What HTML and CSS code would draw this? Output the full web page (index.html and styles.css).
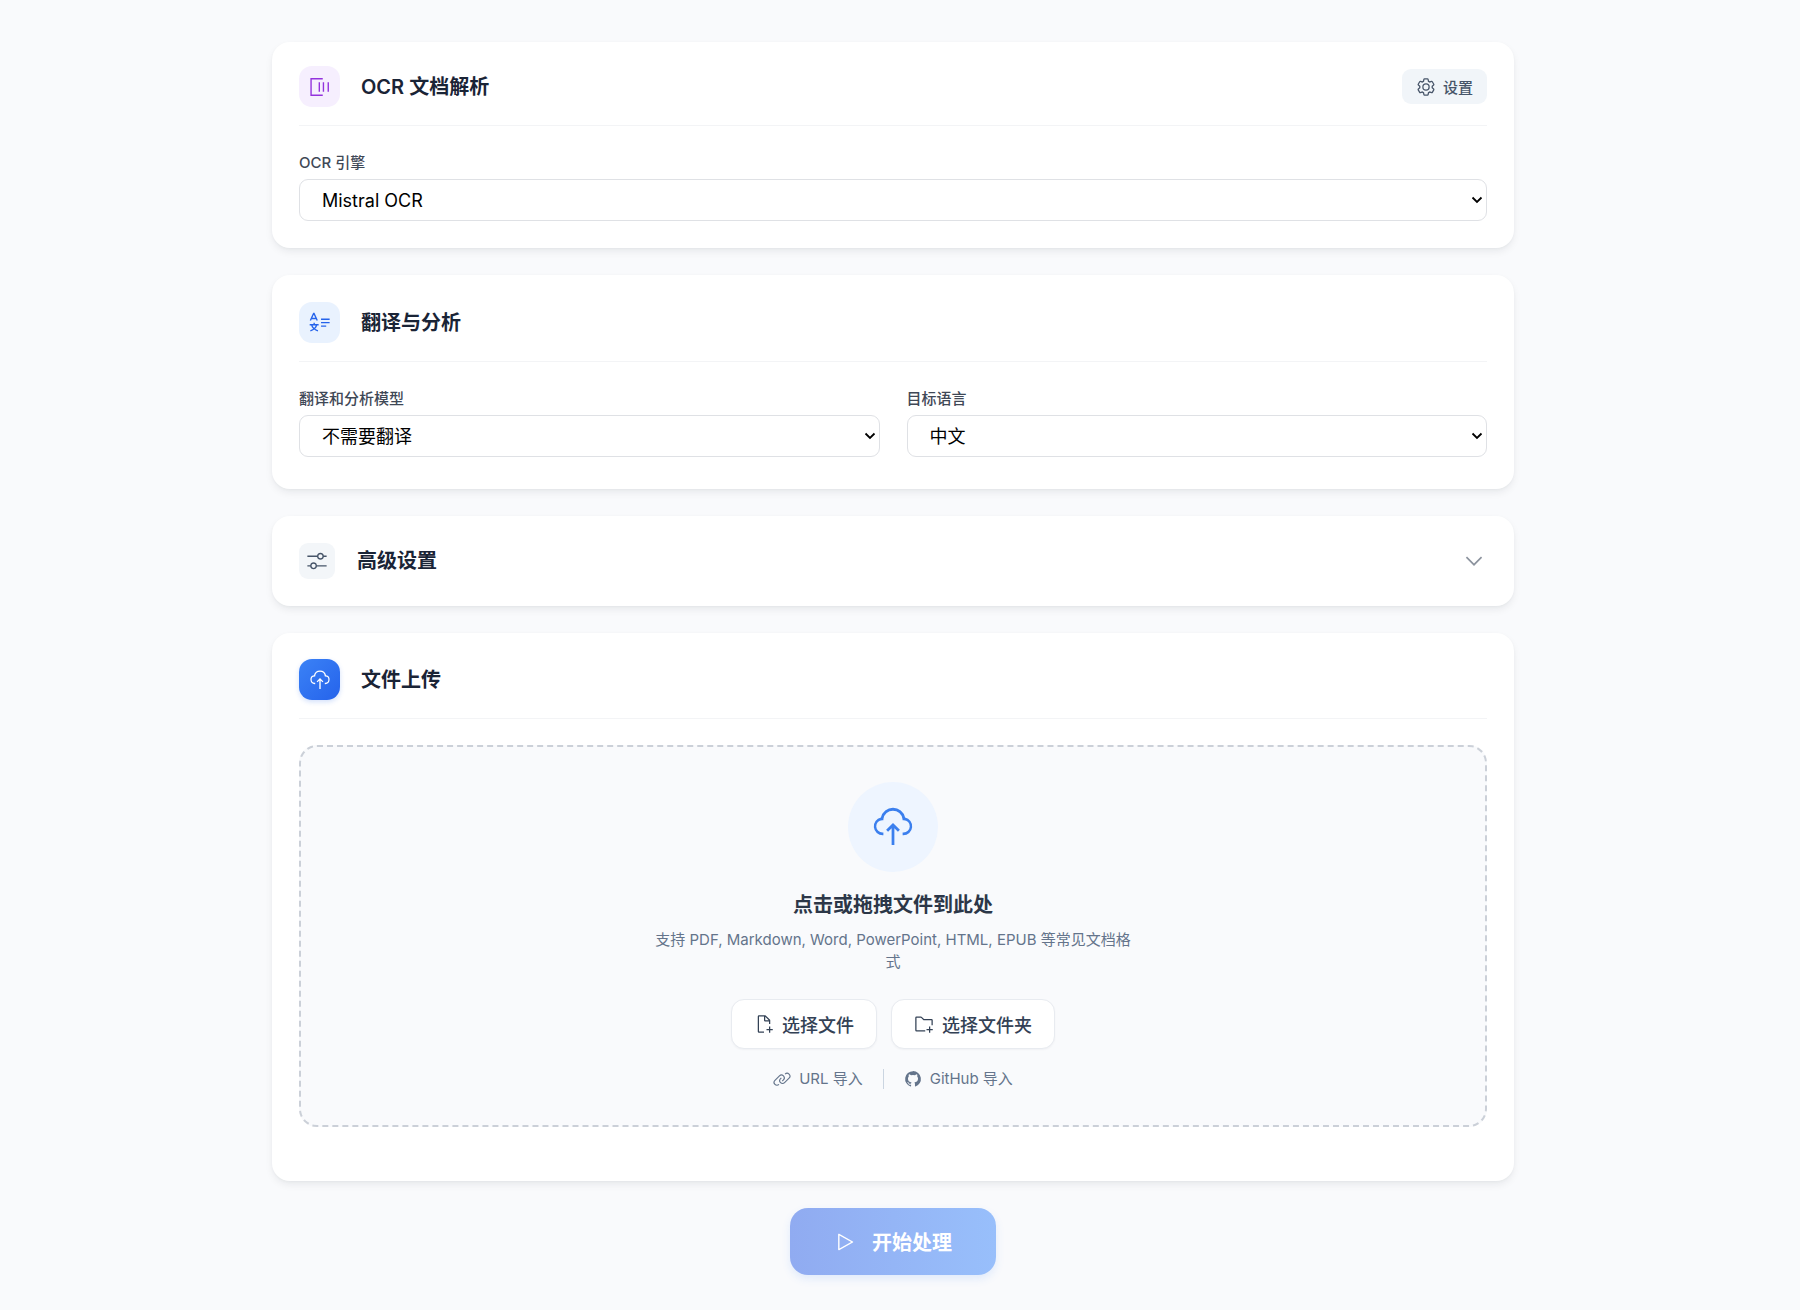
FILE: index.html
```html
<!DOCTYPE html>
<html lang="zh-CN">
<head>
<meta charset="utf-8">
<meta name="viewport" content="width=device-width, initial-scale=1">
<title>OCR 文档解析</title>
<link rel="stylesheet" href="styles.css">
</head>
<body>
<svg class="sprite" aria-hidden="true">
  <symbol id="cloud-upload" viewBox="0 0 32 32">
    <path d="M11 18l1.41 1.41L15 16.83V29h2V16.83l2.59 2.58L21 18l-5-5-5 5z"/>
    <path d="M23.5 22H23v-2h.5a4.5 4.5 0 0 0 .36-9H23l-.1-.82a7 7 0 0 0-13.88 0L9 11h-.86a4.5 4.5 0 0 0 .36 9H9v2h-.5A6.5 6.5 0 0 1 7.2 9.14a9 9 0 0 1 17.6 0A6.5 6.5 0 0 1 23.5 22z"/>
  </symbol>
</svg>
<main class="page">
  <section class="card">
    <header class="card-head">
      <span class="badge badge-purple">
        <svg class="icon-md" viewBox="0 0 32 32"><path d="M20 3v2H4v22h16v2H2V3zM14 9h2v14h-2zM20 9h2v14h-2zM27 9h2v14h-2z"/></svg>
      </span>
      <h2 class="title">OCR 文档解析</h2>
      <button class="settings" type="button">
        <svg class="icon-sm" viewBox="0 0 32 32"><path d="M27 16.76v-1.53l1.92-1.68A2 2 0 0 0 29.3 11l-2.36-4a2 2 0 0 0-1.73-1 2 2 0 0 0-.64.1l-2.43.82a11.35 11.35 0 0 0-1.31-.75l-.51-2.52a2 2 0 0 0-2-1.61h-4.68a2 2 0 0 0-2 1.61l-.51 2.52a11.48 11.48 0 0 0-1.32.75l-2.38-.86A2 2 0 0 0 6.79 6a2 2 0 0 0-1.73 1L2.7 11a2 2 0 0 0 .41 2.51L5 15.24v1.53l-1.89 1.68A2 2 0 0 0 2.7 21l2.36 4a2 2 0 0 0 1.73 1 2 2 0 0 0 .64-.1l2.43-.82a11.35 11.35 0 0 0 1.31.75l.51 2.52a2 2 0 0 0 2 1.61h4.72a2 2 0 0 0 2-1.61l.51-2.52a11.48 11.48 0 0 0 1.32-.75l2.42.82a2 2 0 0 0 .64.1 2 2 0 0 0 1.73-1l2.28-4a2 2 0 0 0-.41-2.51ZM25.21 24l-3.43-1.16a8.86 8.86 0 0 1-2.71 1.57L18.36 28h-4.72l-.71-3.55a9.36 9.36 0 0 1-2.7-1.57L6.79 24l-2.36-4 2.72-2.4a8.9 8.9 0 0 1 0-3.13L4.43 12l2.36-4 3.43 1.16a8.86 8.86 0 0 1 2.71-1.57L13.64 4h4.72l.71 3.55a9.36 9.36 0 0 1 2.7 1.57L25.21 8l2.36 4-2.72 2.4a8.9 8.9 0 0 1 0 3.13L27.57 20Z"/><path d="M16 22a6 6 0 1 1 6-6 5.94 5.94 0 0 1-6 6zm0-10a3.91 3.91 0 0 0-4 4 3.91 3.91 0 0 0 4 4 3.91 3.91 0 0 0 4-4 3.91 3.91 0 0 0-4-4z"/></svg>
        设置
      </button>
    </header>
    <div class="field">
      <label for="engine">OCR 引擎</label>
      <select id="engine"><option>Mistral OCR</option></select>
    </div>
  </section>

  <section class="card card-translate">
    <header class="card-head">
      <span class="badge badge-sky">
        <svg class="icon-md" viewBox="0 0 32 32"><path class="line" d="M2 12.500 6.700 2h.600L12 12.500M3.500 9.500h7M1 18.500h13M7.500 15.500v3M4 19c1 4.500 4 6.500 9 8.500M11 19c-1 4.500-4 6.500-9 8.500M17.500 10.500h12.500M17.500 15.500h12.500M17.500 20.500h7.500"/></svg>
      </span>
      <h2 class="title">翻译与分析</h2>
    </header>
    <div class="fields">
      <div class="field">
        <label for="model">翻译和分析模型</label>
        <select id="model"><option>不需要翻译</option></select>
      </div>
      <div class="field">
        <label for="lang">目标语言</label>
        <select id="lang"><option>中文</option></select>
      </div>
    </div>
  </section>

  <section class="card card-advanced">
    <button class="toggle" type="button" aria-expanded="false">
      <span class="badge badge-gray">
        <svg class="icon-md" viewBox="0 0 32 32"><path d="M30 8h-4.100a5 5 0 0 0-9.800 0H2v2h14.100a5 5 0 0 0 9.800 0H30zm-9 4a3 3 0 1 1 3-3 3 3 0 0 1-3 3zM2 24h4.100a5 5 0 0 0 9.800 0H30v-2H15.900a5 5 0 0 0-9.800 0H2zm9-4a3 3 0 1 1-3 3 3 3 0 0 1 3-3z"/></svg>
      </span>
      <span class="title">高级设置</span>
      <svg class="chevron" viewBox="0 0 32 32"><path d="M16 22 6 12l1.400-1.400 8.600 8.600 8.600-8.600L26 12z"/></svg>
    </button>
  </section>

  <section class="card card-upload">
    <header class="card-head">
      <span class="badge badge-blue"><svg class="icon-md"><use href="#cloud-upload"/></svg></span>
      <h2 class="title">文件上传</h2>
    </header>
    <div class="dropzone">
      <span class="cloud"><svg class="icon-xl"><use href="#cloud-upload"/></svg></span>
      <h3 class="drop-title">点击或拖拽文件到此处</h3>
      <p class="hint">支持 PDF, Markdown, Word, PowerPoint, HTML, EPUB 等常见文档格式</p>
      <div class="picks">
        <button class="pick" type="button">
          <svg class="icon-sm" viewBox="0 0 32 32"><path d="M30 24h-4v-4h-2v4h-4v2h4v4h2v-4h4zM16 28H8V4h8v6a2 2 0 0 0 2 2h6v4h2v-6a.9.9 0 0 0-.3-.7l-7-7A.9.9 0 0 0 18 2H8a2 2 0 0 0-2 2v24a2 2 0 0 0 2 2h8zm2-23.600 5.600 5.600H18z"/></svg>
          选择文件
        </button>
        <button class="pick" type="button">
          <svg class="icon-sm" viewBox="0 0 32 32"><path d="M26 20h-2v4h-4v2h4v4h2v-4h4v-2h-4zM28 8H16l-3.400-3.400A2 2 0 0 0 11.200 4H4a2 2 0 0 0-2 2v20a2 2 0 0 0 2 2h14v-2H4V6h7.200l4 4H28v8h2v-8a2 2 0 0 0-2-2z"/></svg>
          选择文件夹
        </button>
      </div>
      <div class="imports">
        <button class="import" type="button">
          <svg class="icon-xs" viewBox="0 0 32 32"><path d="M29.250 6.760a6 6 0 0 0-8.500 0l1.420 1.420a4 4 0 1 1 5.670 5.670l-8 8a4 4 0 1 1-5.670-5.660l1.410-1.420-1.410-1.420-1.420 1.420a6 6 0 0 0 0 8.500A6 6 0 0 0 17 25a6 6 0 0 0 4.270-1.760l8-8a6 6 0 0 0-.02-8.480z"/><path d="M4.190 24.820a4 4 0 0 1 0-5.670l8-8a4 4 0 0 1 5.670 0A3.940 3.940 0 0 1 19 14a4 4 0 0 1-1.170 2.850L15.710 19l1.420 1.420 2.120-2.120a6 6 0 0 0-8.510-8.510l-8 8a6 6 0 0 0 0 8.510A6 6 0 0 0 7 28a6.070 6.070 0 0 0 4.280-1.760l-1.420-1.420a4 4 0 0 1-5.670 0z"/></svg>
          URL 导入
        </button>
        <span class="bar"></span>
        <button class="import" type="button">
          <svg class="icon-xs" viewBox="0 0 32 32"><path d="M16 2a14 14 0 0 0-4.430 27.280c.7.130 1-.3 1-.67s0-1.210 0-2.380c-3.890.840-4.710-1.880-4.710-1.880A3.710 3.710 0 0 0 6.240 22.300c-1.270-.860.1-.850.1-.850A2.940 2.940 0 0 1 8.480 22.900a3 3 0 0 0 4.080 1.160 2.930 2.930 0 0 1 .88-1.870c-3.100-.360-6.370-1.560-6.370-6.920a5.400 5.400 0 0 1 1.440-3.760 5 5 0 0 1 .14-3.700s1.170-.380 3.850 1.430a13.300 13.300 0 0 1 7 0c2.670-1.810 3.840-1.430 3.840-1.430a5 5 0 0 1 .14 3.700 5.400 5.400 0 0 1 1.440 3.760c0 5.380-3.270 6.560-6.390 6.910a3.330 3.330 0 0 1 .95 2.590c0 1.870 0 3.380 0 3.840s.25.810 1 .67A14 14 0 0 0 16 2z"/></svg>
          GitHub 导入
        </button>
      </div>
    </div>
  </section>

  <button class="start" type="button">
    <svg class="icon-md" viewBox="0 0 32 32"><path d="M7 28a1 1 0 0 1-1-1V5a1 1 0 0 1 1.500-.870l20 11a1 1 0 0 1 0 1.740l-20 11A1 1 0 0 1 7 28zM8 6.700v18.600L24.900 16z"/></svg>
    开始处理
  </button>
</main>
</body>
</html>
```
FILE: styles.css
```css
* {
  box-sizing: border-box;
}

body {
  margin: 0;
  padding: 42px 14px 35px 0;
  background: #f9fafc;
  color: #1e293b;
  font-family: Inter, "Noto Sans CJK SC", sans-serif;
  font-size: 15px;
  line-height: 22px;
}

button,
select {
  font-family: inherit;
}

button {
  border: 0;
  background: none;
  cursor: pointer;
}

svg {
  display: block;
  flex: none;
  fill: currentColor;
}

.line {
  fill: none;
  stroke: currentColor;
  stroke-width: 2;
}

.sprite {
  position: absolute;
  width: 0;
  height: 0;
}

.icon-xs {
  width: 18px;
  height: 18px;
}

.icon-sm {
  width: 20px;
  height: 20px;
}

.icon-md {
  width: 22px;
  height: 22px;
}

.icon-xl {
  width: 44px;
  height: 44px;
}

.page {
  display: flex;
  flex-direction: column;
  gap: 27px;
  max-width: 1242px;
  margin: 0 auto;
}

.card {
  padding: 24px 27px 27px;
  border-radius: 18px;
  background: #fff;
  box-shadow: 0 4px 8px -1px rgba(15, 23, 42, 0.08), 0 1px 3px rgba(15, 23, 42, 0.03);
}

.card-translate {
  padding: 27px 27px 32px;
}

.card-upload {
  padding: 26px 27px 54px;
}

.card-head {
  display: flex;
  align-items: center;
  gap: 21px;
  padding-bottom: 18px;
  margin-bottom: 26px;
  border-bottom: 1px solid #f3f4f6;
}

.title {
  margin: 0;
  color: #1a2436;
  font-size: 20px;
  font-weight: 600;
  line-height: 30px;
}

.badge {
  display: flex;
  flex: none;
  align-items: center;
  justify-content: center;
  width: 41px;
  height: 41px;
  border-radius: 13px;
}

.badge-purple {
  background: #f6effe;
  color: #9333dd;
}

.badge-sky {
  background: #e9f2fe;
  color: #2563eb;
}

.badge-gray {
  width: 36px;
  height: 36px;
  border-radius: 9px;
  background: #f3f6f9;
  color: #475569;
}

.badge-blue {
  background: linear-gradient(135deg, #3b82f6, #2563eb);
  box-shadow: 0 2px 5px rgba(37, 99, 235, 0.2);
  color: #fff;
}

.settings {
  display: flex;
  align-items: center;
  gap: 7px;
  height: 35px;
  margin-left: auto;
  padding: 0 14px;
  border-radius: 9px;
  background: #f1f5f9;
  color: #475569;
  font-size: 15px;
  font-weight: 500;
}

.field {
  display: flex;
  flex-direction: column;
  gap: 5px;
}

.fields {
  display: grid;
  grid-template-columns: 1fr 1fr;
  gap: 27px;
}

.field label {
  color: #3f4856;
  font-weight: 500;
}

.field select {
  width: 100%;
  height: 42px;
  padding: 0 22px;
  border: 1px solid #dfe1e5;
  border-radius: 9px;
  appearance: none;
  background: #fff url("data:image/svg+xml,%3Csvg xmlns='http://www.w3.org/2000/svg' viewBox='0 0 12 8'%3E%3Cpath d='M1.500 1.500 6 6l4.500-4.500' fill='none' stroke='%23000' stroke-width='1.800'/%3E%3C/svg%3E") no-repeat right 3px center / 12px 8px;
  color: #000;
  font-size: 18px;
}

.card-advanced {
  padding: 27px;
}

.toggle {
  display: flex;
  align-items: center;
  gap: 22px;
  width: 100%;
  padding: 0;
  color: inherit;
  text-align: left;
}

.chevron {
  width: 26px;
  height: 26px;
  margin-left: auto;
  color: #8b929d;
}

.dropzone {
  display: flex;
  flex-direction: column;
  align-items: center;
  padding: 35px 27px;
  border: 2px dashed #cbd0d8;
  border-radius: 18px;
  background: #f9fafc;
}

.cloud {
  display: flex;
  align-items: center;
  justify-content: center;
  width: 90px;
  height: 90px;
  border-radius: 50%;
  background: #eef5ff;
  color: #3b7fee;
}

.drop-title {
  margin: 18px 0 9px;
  color: #2c3748;
  font-size: 20px;
  font-weight: 600;
  line-height: 30px;
}

.hint {
  max-width: 486px;
  margin: 0 0 26px;
  color: #64748b;
  text-align: center;
}

.picks {
  display: flex;
  gap: 14px;
}

.pick {
  display: flex;
  align-items: center;
  gap: 8px;
  height: 50px;
  padding: 0 22px;
  border: 1px solid #e8ebf0;
  border-radius: 13px;
  background: #fff;
  box-shadow: 0 1px 2px rgba(15, 23, 42, 0.04);
  color: #334155;
  font-size: 18px;
  font-weight: 500;
}

.imports {
  display: flex;
  align-items: center;
  gap: 20px;
  margin-top: 19px;
}

.import {
  display: flex;
  align-items: center;
  gap: 8px;
  padding: 0;
  color: #64748b;
  font-size: 15px;
  line-height: 22px;
}

.bar {
  width: 1px;
  height: 20px;
  background: #cbd5e1;
}

.start {
  display: flex;
  align-items: center;
  align-self: center;
  gap: 16px;
  height: 67px;
  padding: 0 44px;
  border-radius: 18px;
  background: linear-gradient(90deg, #90abf1, #98bffb);
  box-shadow: 0 4px 8px rgba(59, 130, 246, 0.13);
  color: #fff;
  font-size: 20px;
  font-weight: 700;
}
```
